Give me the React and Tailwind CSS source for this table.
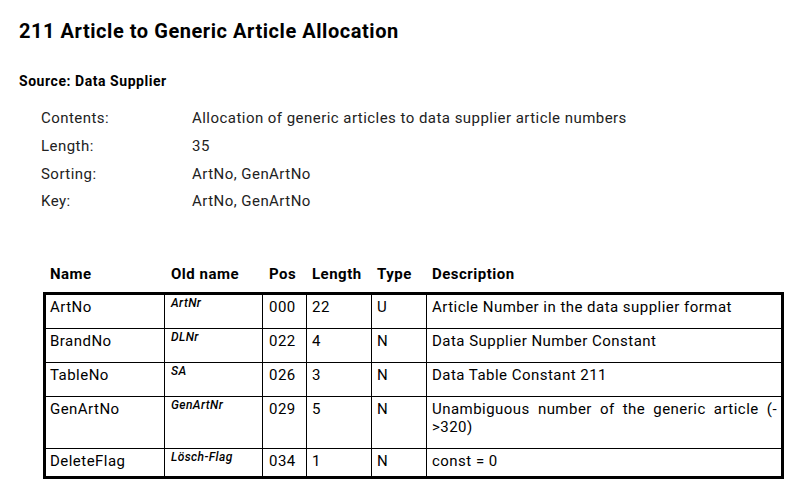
import React from 'react';

const info = [
  { label: 'Contents:', value: 'Allocation of generic articles to data supplier article numbers' },
  { label: 'Length:', value: '35' },
  { label: 'Sorting:', value: 'ArtNo, GenArtNo' },
  { label: 'Key:', value: 'ArtNo, GenArtNo' },
];

const fields = [
  { name: 'ArtNo', old: 'ArtNr', pos: '000', len: '22', type: 'U', desc: 'Article Number in the data supplier format' },
  { name: 'BrandNo', old: 'DLNr', pos: '022', len: '4', type: 'N', desc: 'Data Supplier Number Constant' },
  { name: 'TableNo', old: 'SA', pos: '026', len: '3', type: 'N', desc: 'Data Table Constant 211' },
  { name: 'GenArtNo', old: 'GenArtNr', pos: '029', len: '5', type: 'N', desc: ['Unambiguous number of the generic article (-', '>320)'] },
  { name: 'DeleteFlag', old: 'Lösch-Flag', pos: '034', len: '1', type: 'N', desc: 'const = 0' },
];

const cols = 'grid grid-cols-[119px_98px_44px_65px_55px_1fr]';

const App = () => {
  return (
    <div className="w-[796px] h-[500px] bg-white px-[19px] pt-[19px] text-black overflow-hidden" style={{ fontFamily: 'Roboto, "Noto Sans", sans-serif' }}>
      <h1 className="text-[20px] leading-[24px] font-bold tracking-[0.55px]">211 Article to Generic Article Allocation</h1>
      <h2 className="mt-[29px] text-[14px] leading-[18px] font-bold tracking-[0.55px]">Source: Data Supplier</h2>

      <div className="mt-[15px] pl-[22px] text-[15px] tracking-[0.46px] text-[#222]">
        {info.map((row) => (
          <div key={row.label} className="flex leading-[27.8px]">
            <div className="w-[151px]">{row.label}</div>
            <div>{row.value}</div>
          </div>
        ))}
      </div>

      <div className="ml-[24px] w-[741px]">
        <div className={`${cols} mt-[49px] pb-[9px] px-[3px] text-[15px] leading-[18px] font-bold tracking-[0.5px]`}>
          <div className="pl-[4px]">Name</div>
          <div className="pl-[6px]">Old name</div>
          <div className="pl-[6px]">Pos</div>
          <div className="pl-[5px]">Length</div>
          <div className="pl-[5px]">Type</div>
          <div className="pl-[5px]">Description</div>
        </div>

        <div className="border-[3px] border-black text-[15px] leading-[18px] tracking-[0.47px]">
          {fields.map((f, i) => {
            const last = i === fields.length - 1;
            const pb = last ? 'pb-[6px]' : 'pb-[12px]';
            return (
              <div key={f.name} className={`${cols} ${last ? '' : 'border-b border-black'}`}>
                <div className={`border-r border-black pl-[4px] pt-[3px] ${pb}`}>{f.name}</div>
                <div className="border-r border-black pl-[6px] pt-[1px] text-[12px] leading-[14px] italic font-medium tracking-[0.4px]">{f.old}</div>
                <div className="border-r border-black pl-[6px] pt-[3px]">{f.pos}</div>
                <div className="border-r border-black pl-[5px] pt-[3px]">{f.len}</div>
                <div className="border-r border-black pl-[5px] pt-[3px]">{f.type}</div>
                <div className={`pl-[5px] pr-[4px] pt-[3px] ${pb}`}>
                  {Array.isArray(f.desc) ? (
                    <>
                      <div className="text-justify [text-align-last:justify]">{f.desc[0]}</div>
                      <div>{f.desc[1]}</div>
                    </>
                  ) : (
                    f.desc
                  )}
                </div>
              </div>
            );
          })}
        </div>
      </div>
    </div>
  );
};

export default App;
